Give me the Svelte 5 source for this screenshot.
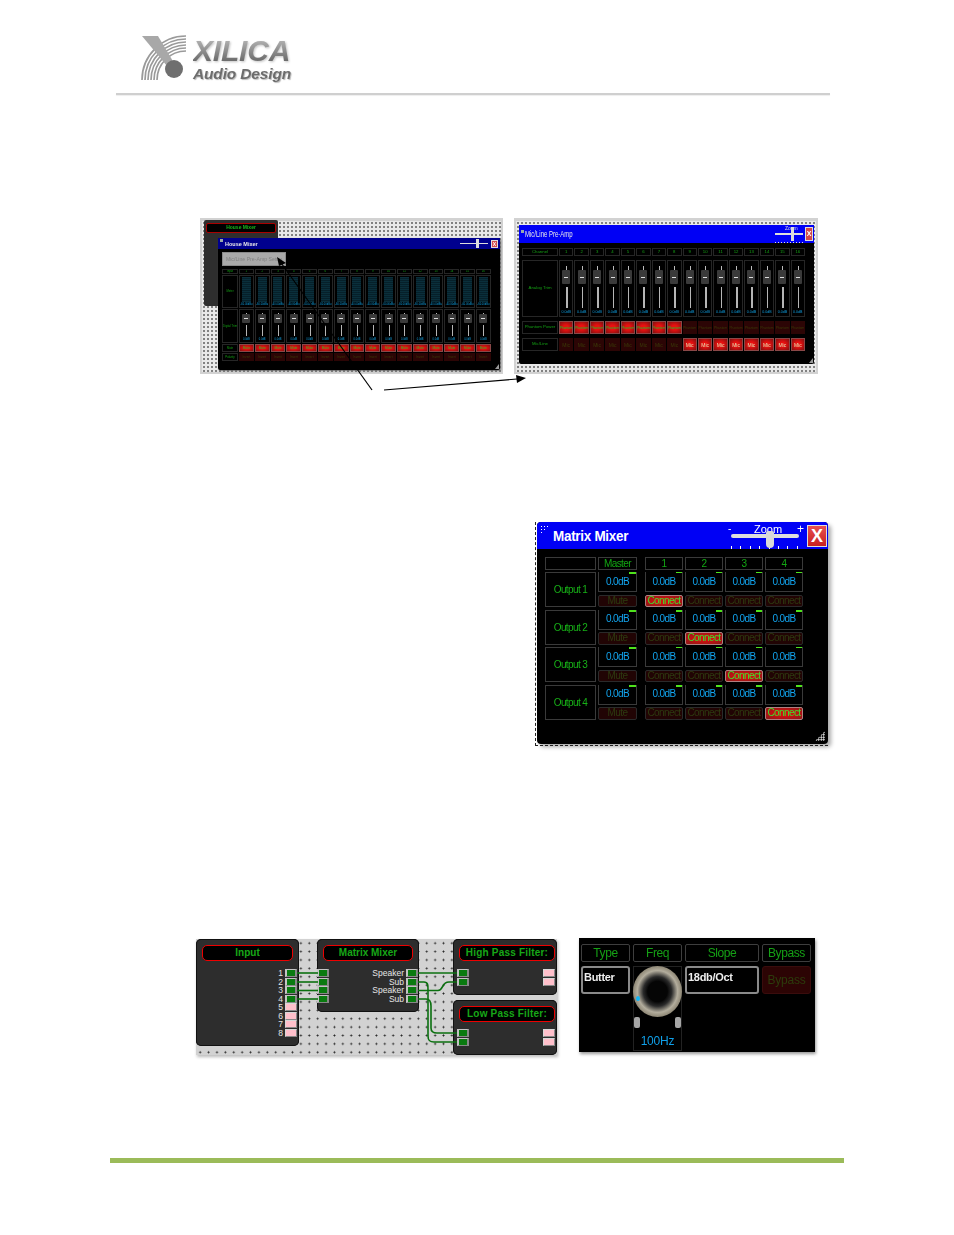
<script>
  const chans = Array.from({ length: 16 }, (_, i) => i + 1);
  const outputs = [1, 2, 3, 4];
  const tracks = [1, 2, 3, 4];

  // input/output ports of the block diagram, top to bottom
  const inputPorts = [1, 2, 3, 4, 5, 6, 7, 8];
  const mixerOuts = ["Speaker", "Sub", "Speaker", "Sub"];
  const arcs = [29, 32, 35, 38, 41, 44];
</script>

{#snippet zoomer(label)}
  <div class="zoomer">
    <span class="zlabel">{label}</span>
    <span class="ztrack"></span>
    <span class="zthumb"></span>
  </div>
{/snippet}

{#snippet fader()}
  <div class="fader">
    <span class="stem"></span>
    <span class="cap"><i></i></span>
    <span class="rail"></span>
  </div>
{/snippet}

<div class="page">
  <header class="head">
    <div class="logo">
      <svg class="mark" viewBox="0 0 50 50" width="50" height="50">
        <g fill="none" stroke="#9a9a9a" stroke-width="1.7">
          {#each arcs as r}
            <path d="M{45 - r} 45 A{r} {r} 0 0 1 45 {45 - r}" />
          {/each}
        </g>
        <polygon points="1,1 17,1 33,28 26,31" fill="#a8a8a8" />
        <circle cx="33" cy="34" r="9" fill="#6f6f6f" />
      </svg>
      <div class="wordmark">
        <span class="xilica">XILICA</span>
        <span class="audio">Audio Design</span>
      </div>
    </div>
    <div class="rule"></div>
  </header>

  <section class="row-one">
    <div class="canvas fine house-canvas">
      <div class="mini-node"><div class="mini-title">House Mixer</div></div>
      <div class="house">
        <div class="bar navy">
          <span class="grip"></span>
          <span class="bar-title">House Mixer</span>
          {@render zoomer("")}
          <span class="close">X</span>
        </div>
        <div class="setup">Mic/Line Pre-Amp Setup</div>
        <div class="house-grid">
          <div class="cell lab">Input</div>
          {#each chans as c}<div class="cell lab">{c}</div>{/each}
          <div class="cell lab">Meter</div>
          {#each chans as c}
            <div class="cell meter"><span class="level"></span><span class="db">-60.00dBu</span></div>
          {/each}
          <div class="cell lab">Digital Trim</div>
          {#each chans as c}
            <div class="cell strip">{@render fader()}<span class="db">0.0dB</span></div>
          {/each}
          <div class="cell lab">Mute</div>
          {#each chans as c}<div class="led on">Mute</div>{/each}
          <div class="cell lab">Polarity</div>
          {#each chans as c}<div class="led off">Invert</div>{/each}
        </div>
        <span class="resize"></span>
      </div>
    </div>

    <div class="canvas fine pre-canvas">
      <div class="pre">
        <div class="bar blue">
          <span class="grip"></span>
          <span class="bar-title">Mic/Line Pre-Amp</span>
          {@render zoomer("Zoom")}
          <span class="close">X</span>
        </div>
        <div class="pre-grid">
          <div class="cell lab">Channel</div>
          {#each chans as c}<div class="cell lab">{c}</div>{/each}
          <div class="cell lab">Analog Trim</div>
          {#each chans as c}
            <div class="cell strip">{@render fader()}<span class="db">0.0dB</span></div>
          {/each}
          <div class="cell lab">Phantom Power</div>
          {#each chans as c}
            <div class="led" class:on={c <= 8} class:off={c > 8}>Phantom</div>
          {/each}
          <div class="cell lab">Mic/Line</div>
          {#each chans as c}
            <div class="led mic" class:on={c > 8} class:off={c <= 8}>Mic</div>
          {/each}
        </div>
        <span class="resize"></span>
      </div>
    </div>

    <svg class="arrows" width="954" height="200" viewBox="0 218 954 200">
      <path d="M279 260 L372 390" stroke="#000" stroke-width="1.2" />
      <path d="M384 390 L517 379" stroke="#000" stroke-width="1.2" />
      <polygon points="526,378 516,375 517,383" fill="#000" />
      <polygon points="277,257 286,263 279,266" fill="#000" />
    </svg>
  </section>

  <section class="row-two">
    <div class="matrix">
      <div class="matrix-bar">
        <span class="dots"></span>
        <span class="matrix-title">Matrix Mixer</span>
        <div class="mzoom">
          <span class="m-minus">-</span>
          <span class="m-label">Zoom</span>
          <span class="m-plus">+</span>
          <span class="m-track"></span>
          <span class="m-ticks"></span>
          <span class="m-thumb"></span>
        </div>
        <span class="m-close">X</span>
      </div>
      <div class="matrix-grid">
        <div class="mcell"></div>
        <div class="mcell head-g">Master</div>
        <span></span>
        {#each tracks as t}<div class="mcell head-g">{t}</div>{/each}

        {#each outputs as o}
          <div class="mcell out">Output {o}</div>
          <div class="mcell val master-val" class:thick={true}>0.0dB</div>
          <span></span>
          {#each tracks as t}
            <div class="mcell val" class:thick={o % 2 === 0}>0.0dB</div>
          {/each}
          <div class="mbtn">Mute</div>
          <span></span>
          {#each tracks as t}
            <div class="mbtn" class:lit={t === o}>Connect</div>
          {/each}
        {/each}
      </div>
      <span class="m-resize"></span>
    </div>
  </section>

  <section class="row-three">
    <div class="canvas wide diagram">
      <div class="node input-node">
        <div class="node-title">Input</div>
        <div class="ports">
          {#each inputPorts as p}
            <div class="port-row">
              <span class="pname">{p}</span>
              <span class="port" class:used={p <= 4}></span>
            </div>
          {/each}
        </div>
      </div>

      <div class="node mixer-node">
        <div class="node-title">Matrix Mixer</div>
        <div class="ports">
          {#each mixerOuts as name}
            <div class="port-row split">
              <span class="port used"></span>
              <span class="pname push">{name}</span>
              <span class="port used"></span>
            </div>
          {/each}
        </div>
      </div>

      <div class="node hp-node">
        <div class="node-title">High Pass Filter:</div>
        <div class="ports">
          {#each [1, 2] as p}
            <div class="port-row split">
              <span class="port used"></span>
              <span class="port push"></span>
            </div>
          {/each}
        </div>
      </div>

      <div class="node lp-node">
        <div class="node-title">Low Pass Filter:</div>
        <div class="ports">
          {#each [1, 2] as p}
            <div class="port-row split">
              <span class="port used"></span>
              <span class="port push"></span>
            </div>
          {/each}
        </div>
      </div>

      <svg class="wires" width="361" height="117" viewBox="196 939 361 117">
        <g fill="none" stroke="#0b700f" stroke-width="1.6">
          <path d="M297 973 H318" />
          <path d="M297 982 H318" />
          <path d="M297 990.5 H318" />
          <path d="M297 999 H318" />
          <path d="M418 973 H457" />
          <path d="M418 990.5 H438 C444 990.5 441 982 449 982 H457" />
          <path d="M418 982 H424 C428 982 428 985 428 990 V1036 C428 1041 430 1042 434 1042 H457" />
          <path d="M418 999 H426 C430 999 431 1002 431 1006 V1028 C431 1032 433 1033 437 1033 H457" />
        </g>
      </svg>
    </div>

    <div class="filter">
      <div class="fcell flab">Type</div>
      <div class="fcell flab">Freq</div>
      <div class="fcell flab">Slope</div>
      <div class="fcell flab">Bypass</div>
      <div class="fcell fval">Butter</div>
      <div class="knob-box">
        <div class="knob"><span class="knob-dot"></span></div>
        <div class="pegs"><span></span><span></span></div>
        <span class="hz">100Hz</span>
      </div>
      <div class="fcell fval">18db/Oct</div>
      <div class="fbypass">Bypass</div>
    </div>
  </section>

  <footer class="foot"></footer>
</div>

<style>
  :global(body) {
    margin: 0;
    background: #fff;
    font-family: "Liberation Sans", Arial, sans-serif;
  }
  .page {
    position: relative;
    width: 954px;
    height: 1235px;
    overflow: hidden;
  }

  /* header */
  .head {
    padding: 35px 124px 0 116px;
  }
  .logo {
    display: flex;
    gap: 2px;
    margin-left: 25px;
    height: 58px;
    filter: blur(0.4px);
  }
  .mark {
    flex: none;
  }
  .wordmark {
    display: flex;
    flex-direction: column;
    font-style: italic;
    font-weight: 700;
    padding-top: 1px;
  }
  .xilica {
    font-size: 30px;
    line-height: 30px;
    letter-spacing: -0.2px;
    color: transparent;
    background: linear-gradient(#b0b0b0 15%, #6a6a6a 85%);
    background-clip: text;
    -webkit-background-clip: text;
    filter: drop-shadow(1px 1px 1px #c4c4c4);
  }
  .audio {
    font-size: 15.5px;
    line-height: 16px;
    letter-spacing: -0.15px;
    color: #6d6d6d;
    text-shadow: 1px 1px 1px #bbb;
  }
  .rule {
    height: 2px;
    background: #cfcfcf;
    box-shadow: 0 1px 1px #eee;
  }

  /* first row of screenshots */
  .row-one {
    display: flex;
    gap: 11px;
    padding: 123px 0 0 200px;
    height: 156px;
  }
  .canvas {
    position: relative;
    flex: none;
  }
  .fine {
    background-color: #e9e9e9;
    background-image: radial-gradient(circle, #333 0.6px, transparent 0.85px);
    background-size: 4px 4px;
    border: solid #d2d2d2;
    border-width: 3px 2px 2px 2px;
    box-sizing: border-box;
    height: 156px;
    filter: blur(0.3px);
  }
  .house-canvas {
    width: 303px;
  }
  .pre-canvas {
    width: 304px;
  }
  .mini-node {
    position: absolute;
    left: 2px;
    top: -1px;
    width: 74px;
    height: 86px;
    background: #2e2e2e;
    border-radius: 2px;
    padding: 3px 2px;
    box-sizing: border-box;
  }
  .mini-title {
    height: 8px;
    line-height: 7px;
    border: 1px solid #a00;
    border-radius: 2px;
    background: #000;
    color: #19b419;
    font-size: 5px;
    font-weight: 700;
    text-align: center;
  }
  .house {
    position: absolute;
    left: 16px;
    top: 17px;
    width: 282px;
    height: 132px;
    background: #000;
    border-radius: 2px;
    box-shadow: 1px 1px 2px #666;
  }
  .pre {
    position: absolute;
    left: 3px;
    top: 4px;
    width: 295px;
    height: 139px;
    background: #000;
    border-radius: 2px;
  }
  .bar {
    display: flex;
    align-items: center;
    position: relative;
  }
  .navy {
    height: 11px;
    background: #00008e;
  }
  .blue {
    height: 18px;
    background: #0000f5;
  }
  .grip {
    width: 3px;
    height: 3px;
    margin: -6px 1px 0 2px;
    background: #9aa;
  }
  .bar-title {
    color: #e8e8e8;
    font-weight: 700;
    font-size: 5.5px;
    margin-left: 1px;
  }
  .blue .bar-title {
    font-size: 6px;
    font-weight: 400;
    transform: scaleY(1.6);
    margin-left: 0;
  }
  .zoomer {
    position: relative;
    width: 28px;
    height: 100%;
    margin-left: auto;
  }
  .ztrack {
    position: absolute;
    left: 0;
    right: 0;
    top: 45%;
    height: 1.5px;
    background: #ddd;
  }
  .zthumb {
    position: absolute;
    left: 16px;
    top: 10%;
    width: 3px;
    height: 80%;
    background: #ddd;
  }
  .blue .zoomer::after {
    content: "";
    position: absolute;
    left: 0;
    right: 0;
    bottom: 0;
    height: 1px;
    background: repeating-linear-gradient(90deg, #ddd 0 1px, transparent 1px 3px);
  }
  .zlabel {
    position: absolute;
    left: 10px;
    top: 0;
    font-size: 5px;
    color: #ddd;
  }
  .close {
    width: 7px;
    height: 8px;
    margin: 0 2px 0 3px;
    background: #d24a4a;
    border: 1px solid #ddd;
    box-sizing: border-box;
    color: #fff;
    font-size: 5px;
    font-weight: 700;
    line-height: 6px;
    text-align: center;
  }
  .blue .close {
    width: 8px;
    height: 14px;
    margin: 0 1px 0 2px;
    font-size: 7px;
    line-height: 12px;
  }
  .setup {
    width: 64px;
    height: 14px;
    margin: 3px 0 0 4px;
    background: #a9a9a9;
    border: 1px solid #8a8a8a;
    box-sizing: border-box;
    color: #808080;
    font-size: 5.2px;
    line-height: 12px;
    white-space: nowrap;
    text-align: center;
    overflow: hidden;
  }
  .house-grid {
    display: grid;
    grid-template-columns: 16px repeat(16, 14.8px);
    grid-template-rows: 5px 33px 34px 8px 8px;
    gap: 1px;
    margin: 3px 0 0 4px;
  }
  .pre-grid {
    display: grid;
    grid-template-columns: 36px repeat(16, 14.45px);
    grid-template-rows: 8px 57px 13px 13px;
    column-gap: 1px;
    row-gap: 4px;
    margin: 5px 0 0 3px;
  }
  .cell {
    border: 1px solid #262626;
    box-sizing: border-box;
    min-width: 0;
    overflow: hidden;
    text-align: center;
  }
  .lab {
    display: flex;
    align-items: center;
    justify-content: center;
    color: #14a014;
    font-size: 2.8px;
    line-height: 1;
    white-space: nowrap;
  }
  .pre-grid .lab {
    font-size: 4.3px;
  }
  .meter {
    display: flex;
    flex-direction: column;
    align-items: center;
    padding-top: 1px;
  }
  .level {
    flex: 1;
    width: 9px;
    background: repeating-linear-gradient(#0a2f3b 0 1px, #06202a 1px 2px);
  }
  .db {
    color: #0f9fe0;
    font-size: 2.6px;
    line-height: 5px;
    white-space: nowrap;
  }
  .strip {
    display: flex;
    flex-direction: column;
    align-items: center;
  }
  .pre-grid .db {
    font-size: 3.6px;
    line-height: 7px;
  }
  .fader {
    position: relative;
    flex: 1;
    width: 100%;
  }
  .stem {
    position: absolute;
    left: 50%;
    top: 3px;
    width: 1px;
    height: 4px;
    background: #bbb;
  }
  .cap {
    position: absolute;
    left: 50%;
    top: 4px;
    width: 8px;
    margin-left: -4px;
    height: 9px;
    background: #3a3a3a;
    border-radius: 1px;
  }
  .cap i {
    display: block;
    height: 1px;
    margin: 4px 2px 0;
    background: #ddd;
  }
  .rail {
    position: absolute;
    left: 50%;
    top: 15px;
    bottom: 1px;
    width: 1px;
    background: #b5b5b5;
  }
  .pre-grid .cap {
    top: 9px;
    height: 14px;
  }
  .pre-grid .cap i {
    margin-top: 7px;
  }
  .pre-grid .stem {
    top: 5px;
  }
  .pre-grid .rail {
    top: 26px;
    width: 1.5px;
  }
  .led {
    display: flex;
    align-items: center;
    justify-content: center;
    overflow: hidden;
    font-size: 3.2px;
    color: #24c024;
    min-width: 0;
  }
  .led.on {
    background: radial-gradient(ellipse, #e81010 30%, #801010 100%);
    border: 1px solid #8a4848;
    box-sizing: border-box;
  }
  .led.off {
    background: #2c0505;
    color: #3a3a08;
  }
  .pre-grid .led {
    font-size: 3.3px;
  }
  .pre-grid .led.mic {
    font-size: 5px;
  }
  .pre-grid .led.mic.on {
    color: #e0e0b0;
  }
  .resize {
    position: absolute;
    right: 1px;
    bottom: 1px;
    width: 4px;
    height: 5px;
    background: #999;
    clip-path: polygon(100% 0, 100% 100%, 0 100%);
  }

  /* arrows drawn over the figures */
  .arrows {
    position: absolute;
    left: 0;
    top: 218px;
    pointer-events: none;
  }

  /* matrix mixer */
  .row-two {
    padding: 148px 0 0 537px;
  }
  .matrix {
    position: relative;
    width: 291px;
    height: 222px;
    background: #000;
    border-radius: 4px;
    box-shadow: 3px 3px 4px #aaa;
    filter: blur(0.25px);
  }
  .matrix::before {
    content: "";
    position: absolute;
    left: -2px;
    right: 0;
    top: 0;
    bottom: -2px;
    border-left: 1px dashed #222;
    border-bottom: 1px dashed #222;
    pointer-events: none;
  }
  .matrix-bar {
    position: relative;
    display: flex;
    align-items: center;
    height: 27px;
    background: #0000f5;
    border-radius: 4px 4px 0 0;
  }
  .dots {
    position: absolute;
    left: 3px;
    top: 3px;
    width: 10px;
    height: 10px;
    background-image: radial-gradient(circle, #fff 0.8px, transparent 1px);
    background-size: 3px 3px;
    clip-path: polygon(0 0, 100% 0, 0 100%);
  }
  .matrix-title {
    margin-left: 16px;
    color: #fff;
    font-weight: 700;
    font-size: 13.5px;
    letter-spacing: -0.3px;
    transform: scaleY(1.12);
  }
  .mzoom {
    position: relative;
    width: 76px;
    height: 100%;
    margin-left: auto;
    color: #fff;
    font-size: 10px;
  }
  .m-minus {
    position: absolute;
    left: 0;
    top: 1px;
  }
  .m-plus {
    position: absolute;
    right: 0;
    top: 0;
    font-size: 12px;
  }
  .m-label {
    position: absolute;
    left: 26px;
    top: 1px;
    font-size: 11px;
  }
  .m-track {
    position: absolute;
    left: 3px;
    right: 5px;
    top: 12px;
    height: 4px;
    background: #ddd;
    border-radius: 2px;
  }
  .m-ticks {
    position: absolute;
    left: 3px;
    right: 5px;
    bottom: 0;
    height: 3px;
    background: repeating-linear-gradient(90deg, #fff 0 1px, transparent 1px 9.4px);
  }
  .m-thumb {
    position: absolute;
    left: 38px;
    top: 9px;
    width: 8px;
    height: 17px;
    background: #d8d8d8;
    border-radius: 2px 2px 4px 4px;
  }
  .m-close {
    width: 20px;
    height: 22px;
    margin: 0 1px 0 3px;
    background: linear-gradient(#e65050, #c82020);
    border: 1px solid #ddd;
    box-sizing: border-box;
    color: #fff;
    font-size: 18px;
    font-weight: 700;
    line-height: 20px;
    text-align: center;
  }
  .matrix-grid {
    display: grid;
    grid-template-columns: 51px 39px 4px repeat(4, 38px);
    grid-template-rows: 12.5px repeat(8, auto);
    grid-auto-rows: auto;
    column-gap: 2px;
    row-gap: 2.5px;
    padding: 8px 0 0 8px;
  }
  .mcell {
    position: relative;
    box-sizing: border-box;
    border: 1px solid #3a3a3a;
    display: flex;
    align-items: center;
    justify-content: center;
    font-size: 10px;
    letter-spacing: -0.6px;
  }
  .head-g {
    color: #13a813;
  }
  .out {
    grid-row: span 2;
    color: #17b017;
  }
  .val {
    height: 20px;
    color: #12a4ee;
    border-top: 0;
    padding-bottom: 1px;
  }
  .val::after {
    content: "";
    position: absolute;
    right: 0;
    top: 0;
    width: 6px;
    height: 1px;
    background: #4fe21c;
  }
  .val.thick::after {
    height: 2px;
  }
  .master-val::after {
    width: 7px;
  }
  .mbtn {
    height: 12.5px;
    box-sizing: border-box;
    border: 1px solid #2a2a2a;
    border-radius: 2px;
    background: #210404;
    color: #2d3a10;
    font-size: 10px;
    letter-spacing: -0.6px;
    line-height: 10.5px;
    text-align: center;
    white-space: nowrap;
    overflow: hidden;
  }
  .mbtn.lit {
    background: radial-gradient(ellipse, #d01010 30%, #8a1818 100%);
    border-color: #b08080;
    color: #3fe02c;
  }
  .m-resize {
    position: absolute;
    right: 3px;
    bottom: 3px;
    width: 10px;
    height: 10px;
    background-image: radial-gradient(circle, #eee 0.8px, transparent 1px);
    background-size: 2.5px 2.5px;
    clip-path: polygon(100% 0, 100% 100%, 0 100%);
  }

  /* block diagram and filter panel */
  .row-three {
    display: flex;
    gap: 22px;
    align-items: flex-start;
    padding: 195px 0 0 196px;
  }
  .wide {
    width: 361px;
    height: 116px;
    background-color: #d2d2d2;
    background-image: radial-gradient(circle, #222 0.8px, transparent 1.1px);
    background-size: 8.4px 8.4px;
    box-shadow: 1px 2px 3px #bbb;
  }
  .node {
    position: absolute;
    box-sizing: border-box;
    background: #2d2d2d;
    border-radius: 5px;
    box-shadow: inset 0 0 0 1px #111;
  }
  .input-node {
    left: 0;
    top: 0;
    width: 103px;
    height: 107px;
  }
  .mixer-node {
    left: 121px;
    top: 0;
    width: 102px;
    height: 73px;
  }
  .hp-node {
    left: 257px;
    top: 0;
    width: 104px;
    height: 56px;
  }
  .lp-node {
    left: 257px;
    top: 61px;
    width: 104px;
    height: 55px;
  }
  .node-title {
    height: 16px;
    margin: 6px 6px 0;
    box-sizing: border-box;
    border: 1px solid #e00;
    border-radius: 5px;
    background: #000;
    color: #17a817;
    font-size: 10px;
    font-weight: 700;
    line-height: 14px;
    text-align: center;
    white-space: nowrap;
  }
  .hp-node .node-title,
  .lp-node .node-title {
    margin: 6px 2px 0 6px;
    letter-spacing: 0.2px;
  }
  .ports {
    margin-top: 8px;
    padding-right: 2px;
  }
  .port-row {
    display: flex;
    justify-content: flex-end;
    align-items: center;
    gap: 2px;
    height: 8.5px;
  }
  .split {
    justify-content: flex-start;
    gap: 2px;
  }
  .push {
    margin-left: auto;
  }
  .pname {
    color: #e6e6e6;
    font-size: 8.5px;
    font-weight: 400;
    line-height: 8px;
  }
  .port {
    flex: none;
    width: 12px;
    height: 8px;
    box-sizing: border-box;
    background: #ffc0cb;
    border: 1px solid #d8d8d8;
    border-right-color: #888;
    border-bottom-color: #888;
  }
  .port.used {
    background: #0a7a10;
    border-color: #c4c4c4 #888 #888 #c4c4c4;
    border-width: 1.5px 2px;
  }
  .mixer-node .ports {
    padding-right: 1px;
  }
  .hp-node .ports {
    padding: 0 2px 0 4px;
  }
  .lp-node .ports {
    margin-top: 7px;
    padding: 0 2px 0 4px;
  }
  .wires {
    position: absolute;
    left: 0;
    top: 0;
    pointer-events: none;
  }
  .filter {
    box-sizing: border-box;
    display: grid;
    grid-template-columns: 49px 49px 74px 49px;
    grid-template-rows: 18px 28px 53px;
    column-gap: 3px;
    row-gap: 4px;
    width: 236px;
    height: 114px;
    margin-top: -1px;
    padding: 6px 4px 0 2px;
    background: #000;
    box-shadow: 1px 2px 3px #999;
    filter: blur(0.3px);
  }
  .fcell {
    box-sizing: border-box;
    border: 1px solid #3e3e3e;
    border-radius: 2px;
  }
  .flab {
    color: #15a015;
    font-size: 12px;
    letter-spacing: -0.4px;
    text-align: center;
    line-height: 17px;
  }
  .fval {
    border: 2px solid #8a8a8a;
    border-radius: 3px;
    color: #eee;
    font-size: 11px;
    font-weight: 700;
    padding: 3px 0 0 1px;
    letter-spacing: -0.3px;
  }
  .knob-box {
    grid-row: span 2;
    position: relative;
    box-sizing: border-box;
    border: 1px solid #222;
    display: flex;
    flex-direction: column;
    align-items: center;
  }
  .knob {
    position: relative;
    width: 49px;
    height: 51px;
    margin-top: -1px;
    flex: none;
    border-radius: 50%;
    background: radial-gradient(closest-side, #050505 0 40%, #2a2a2a 58%, #b3ad9d 82%, #8d8674 100%);
  }
  .knob-dot {
    position: absolute;
    left: 3px;
    top: 30px;
    width: 4px;
    height: 5px;
    border-radius: 50%;
    background: #11b6f5;
  }
  .pegs {
    display: flex;
    justify-content: space-between;
    width: 47px;
  }
  .pegs span {
    width: 6px;
    height: 11px;
    border-radius: 2px;
    background: #a6a6a6;
  }
  .hz {
    margin-top: 6px;
    color: #0f9fe8;
    font-size: 12px;
    letter-spacing: -0.2px;
  }
  .fbypass {
    border: 1px solid #3a0c0c;
    border-radius: 3px;
    background: #2c0404;
    color: #2c3c0c;
    font-size: 12px;
    line-height: 26px;
    text-align: center;
    letter-spacing: -0.2px;
  }

  .foot {
    position: absolute;
    left: 110px;
    top: 1158px;
    width: 734px;
    height: 5px;
    background: #9bbb59;
  }
</style>
